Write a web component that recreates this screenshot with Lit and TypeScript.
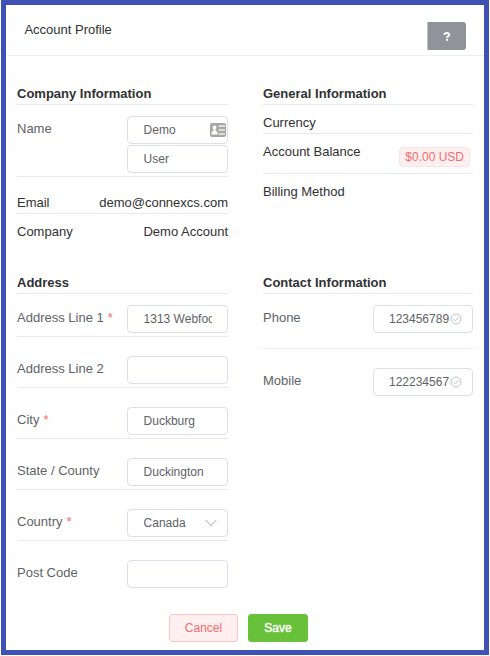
import { LitElement, html, css, svg, nothing } from "lit";
import { customElement, property } from "lit/decorators.js";

type Icon = "card" | "check" | "arrow";

const icons: Record<Icon, unknown> = {
  card: svg`<svg width="16" height="14" viewBox="0 0 16 14">
    <rect width="16" height="14" rx="2" fill="#a6a6a6"/>
    <path fill="#fff" d="M4.500 2.500a1.900 1.900 0 0 1 1.900 2c0 .9-.4 1.600-.9 2v1.200c1 .3 2 .8 2 1.800V11.500H1.500V9.500c0-1 1-1.500 2-1.800V6.500c-.5-.4-.9-1.100-.9-2A1.900 1.900 0 0 1 4.500 2.500z"/>
    <path fill="#dcdcdc" d="M8.500 2H15v2H8.500zM8.500 6H15v2H8.500zM8.500 10H15v2H8.500z"/></svg>`,
  check: svg`<svg width="12" height="12" viewBox="0 0 12 12" fill="none" stroke="#c0c4cc">
    <circle cx="6" cy="6" r="5"/><path d="M3.500 6.100 5.300 7.900 8.900 4.300"/></svg>`,
  arrow: svg`<svg width="12" height="8" viewBox="0 0 12 8" fill="none" stroke="#c0c4cc" stroke-width="1.200">
    <path d="M.8 1.200 6 6.400 11.200 1.200"/></svg>`,
};

@customElement("text-field")
export class TextField extends LitElement {
  @property() value = "";
  @property() icon?: Icon;

  static styles = css`
    :host { display: block; box-sizing: border-box; height: 28px; padding: 0 15px; border: 1px solid #dcdfe6; border-radius: 4px; background: #fff; position: relative; font-size: 12px; line-height: 26px; color: #606266; }
    .value { overflow: hidden; white-space: nowrap; height: 26px; padding-left: 0.6px; }
    .icon { position: absolute; display: flex; align-items: center; top: 0; height: 26px; }
    .card { right: 1px; }
    .check { right: 10.5px; }
    .arrow { right: 10px; }
    .fit { margin-right: -5px; padding-left: 0; }
  `;

  render() {
    return html`<div class="value ${this.icon === "check" ? "fit" : ""}">${this.value}</div>
      ${this.icon ? html`<span class="icon ${this.icon}">${icons[this.icon]}</span>` : nothing}`;
  }
}

interface Field { label: string; value: string; required?: boolean; icon?: Icon }

const address: Field[] = [
  { label: "Address Line 1", value: "1313 Webfoo", required: true },
  { label: "Address Line 2", value: "" },
  { label: "City", value: "Duckburg", required: true },
  { label: "State / County", value: "Duckington" },
  { label: "Country", value: "Canada", required: true, icon: "arrow" },
  { label: "Post Code", value: "" },
];

const contact: Field[] = [
  { label: "Phone", value: "123456789", icon: "check" },
  { label: "Mobile", value: "122234567", icon: "check" },
];

@customElement("app-root")
export class AppRoot extends LitElement {
  static styles = css`
    :host { display: block; height: 656px; background: #fff; font-family: "Liberation Sans", Arial, sans-serif; font-size: 13px; line-height: 15px; color: #303133; }
    * { box-sizing: border-box; }
    .frame { margin: 0 1px; height: 655px; border: 5px solid #3f51b5; background: #fff; }
    header { display: flex; justify-content: space-between; height: 51px; padding: 17px 18px 0 18.4px; border-bottom: 1px solid #ebeef5; }
    .help { width: 39px; height: 28px; border: 1px solid #909399; border-left-color: #bcbec2; border-radius: 0 3px 3px 0; background: #909399; display: flex; align-items: center; justify-content: center; padding: 0; }
    .columns { display: grid; grid-template-columns: 211px 210px; column-gap: 35px; padding: 0 11px; }
    .overview { height: 189px; margin-top: 30px; }
    .details { height: 319px; }
    h2 { margin: 0; height: 19px; font-size: 13px; line-height: 15px; border-bottom: 1px solid #e6e8f5; }
    .row { display: flex; justify-content: space-between; padding-top: 10px; border-bottom: 1px solid #e6e8f5; }
    .row:last-child { border-bottom: 0; }
    .short { height: 29px; }
    .email { height: 37px; padding-top: 18px; }
    .balance { height: 40px; }
    .tag { height: 20px; margin: 3px 3px 0 0; padding: 0 5px; border: 1px solid #fde2e2; border-radius: 4px; background: #fef0f0; color: #f56c6c; font-size: 12px; line-height: 18px; }
    .field { padding-top: 19px; height: 51px; color: #606266; }
    .field .label { padding-top: 5px; }
    .field.first { padding-top: 11px; height: 43px; }
    .field.name { padding-top: 11px; height: 72px; }
    .contact .field { height: 63px; }
    .contact .field.first { height: 55px; }
    .control { width: 101px; display: flex; flex-direction: column; gap: 1px; }
    .contact .control { width: 100px; }
    .required { color: #f56c6c; margin-left: 4px; }
    footer { display: flex; gap: 10px; margin: 20px 0 0 163px; }
    .button { height: 28px; padding: 0; border: 1px solid; border-radius: 3px; font: 12px "Liberation Sans", Arial, sans-serif; }
    .cancel { width: 69px; background: #fef0f0; border-color: #fbc4c4; color: #f56c6c; }
    .save { width: 60px; background: #67c23a; border-color: #67c23a; color: #fff; -webkit-text-stroke: 0.4px #fff; }
  `;

  private field(f: Field, index: number) {
    return html`<div class="row field ${index === 0 ? "first" : ""}">
      <span class="label">${f.label}${f.required ? html`<span class="required">*</span>` : nothing}</span>
      <div class="control"><text-field .value=${f.value} .icon=${f.icon}></text-field></div>
    </div>`;
  }

  render() {
    return html`<div class="frame">
      <header>
        <span>Account Profile</span>
        <button class="help" aria-label="Help">
          <svg width="8" height="9" viewBox="0 0 8 9" fill="none" stroke="#fff" stroke-width="2"><path d="M1.300 2.900C1.600.5 6.300.4 6.300 2.800 6.300 4.200 4 4 4 5.700M4 6.700v2"/></svg>
        </button>
      </header>
      <div class="columns overview">
        <section>
          <h2>Company Information</h2>
          <div class="row field name"><span class="label">Name</span>
            <div class="control">
              <text-field value="Demo" icon="card"></text-field>
              <text-field value="User"></text-field>
            </div>
          </div>
          <div class="row email"><span>Email</span><span>demo@connexcs.com</span></div>
          <div class="row"><span>Company</span><span>Demo Account</span></div>
        </section>
        <section>
          <h2>General Information</h2>
          <div class="row short"><span>Currency</span></div>
          <div class="row balance"><span>Account Balance</span><span class="tag">$0.00 USD</span></div>
          <div class="row"><span>Billing Method</span></div>
        </section>
      </div>
      <div class="columns details">
        <section>
          <h2>Address</h2>
          ${address.map((f, i) => this.field(f, i))}
        </section>
        <section class="contact">
          <h2>Contact Information</h2>
          ${contact.map((f, i) => this.field(f, i))}
        </section>
      </div>
      <footer>
        <button class="button cancel">Cancel</button>
        <button class="button save">Save</button>
      </footer>
    </div>`;
  }
}
